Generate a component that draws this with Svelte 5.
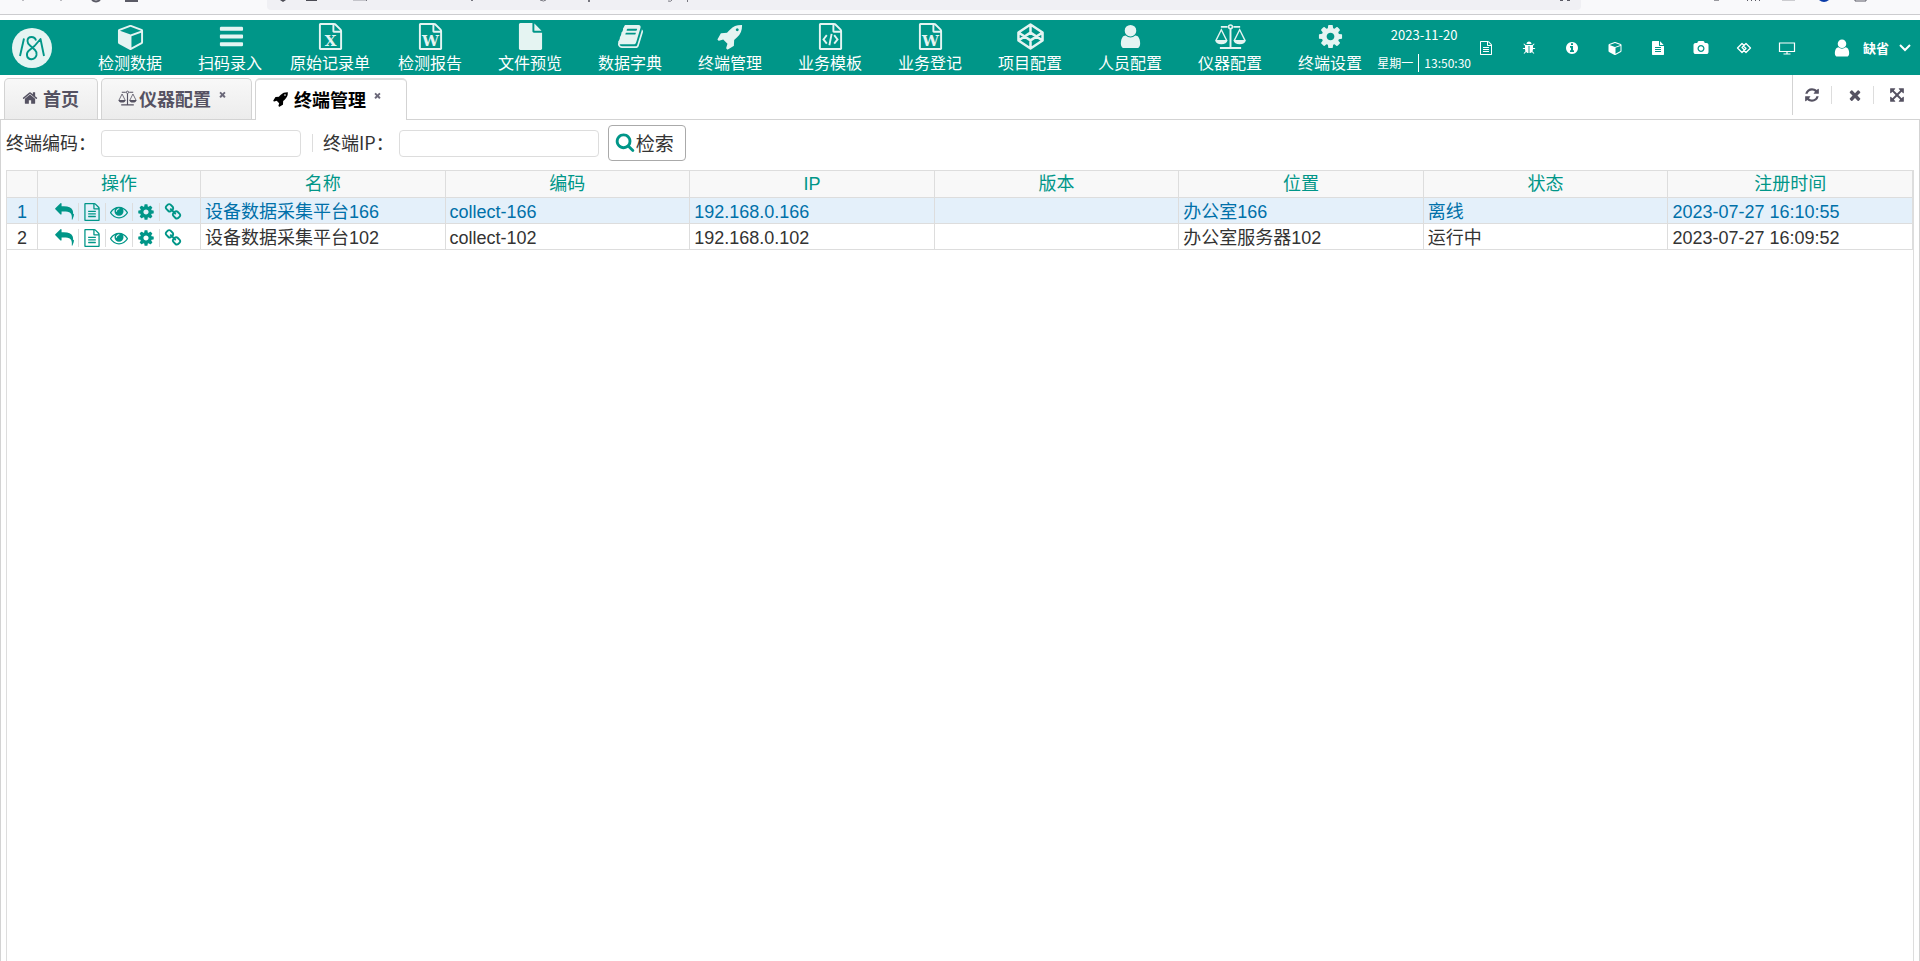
<script lang="ts">
  type Terminal = {
    name: string;
    code: string;
    ip: string;
    version: string;
    location: string;
    status: string;
    registered: string;
  };

  const menu = [
    { label: "检测数据", icon: "cube" },
    { label: "扫码录入", icon: "bars" },
    { label: "原始记录单", icon: "excel" },
    { label: "检测报告", icon: "word" },
    { label: "文件预览", icon: "file" },
    { label: "数据字典", icon: "book" },
    { label: "终端管理", icon: "rocket" },
    { label: "业务模板", icon: "code" },
    { label: "业务登记", icon: "word" },
    { label: "项目配置", icon: "codepen" },
    { label: "人员配置", icon: "user" },
    { label: "仪器配置", icon: "scale" },
    { label: "终端设置", icon: "cog" },
  ];

  const shortcuts = [
    { label: "日志", icon: "textO" },
    { label: "调试", icon: "bug" },
    { label: "信息", icon: "info" },
    { label: "模块", icon: "cube" },
    { label: "文档", icon: "text" },
    { label: "截图", icon: "camera" },
    { label: "链接", icon: "links" },
    { label: "屏幕", icon: "monitor" },
  ];

  const tabs = [
    { label: "首页", icon: "home", closable: false },
    { label: "仪器配置", icon: "scale", closable: true },
    { label: "终端管理", icon: "rocket", closable: true },
  ];

  const columns = ["名称", "编码", "IP", "版本", "位置", "状态", "注册时间"];

  const actions = [
    { label: "返回", icon: "reply" },
    { label: "日志", icon: "textO" },
    { label: "查看", icon: "eye" },
    { label: "设置", icon: "cog" },
    { label: "关联", icon: "chain" },
  ];

  const rows: Terminal[] = [
    {
      name: "设备数据采集平台166",
      code: "collect-166",
      ip: "192.168.0.166",
      version: "",
      location: "办公室166",
      status: "离线",
      registered: "2023-07-27 16:10:55",
    },
    {
      name: "设备数据采集平台102",
      code: "collect-102",
      ip: "192.168.0.102",
      version: "",
      location: "办公室服务器102",
      status: "运行中",
      registered: "2023-07-27 16:09:52",
    },
  ];

  let activeTab = $state(2);
  let selected = $state(0);
  let code = $state("");
  let ip = $state("");

  const page =
    "M1596 380q28 28 48 76t20 88v1152q0 40-28 68t-68 28h-1344q-40 0-68-28t-28-68v-1600q0-40 28-68t68-28h896q40 0 88 20t76 48zm-444-244v376h376q-10-29-22-41l-313-313q-12-12-41-22zm384 1528v-1024h-416q-40 0-68-28t-28-68v-416h-768v1536h1280z";

  const paths: Record<string, string> = {
    textO:
      page +
      "M512 800q0-14 9-23t23-9h704q14 0 23 9t9 23v64q0 14-9 23t-23 9h-704q-14 0-23-9t-9-23v-64zm736 224q14 0 23 9t9 23v64q0 14-9 23t-23 9h-704q-14 0-23-9t-9-23v-64q0-14 9-23t23-9h704zm0 256q14 0 23 9t9 23v64q0 14-9 23t-23 9h-704q-14 0-23-9t-9-23v-64q0-14 9-23t23-9h704z",
    text: "M1596 476q14 14 28 36h-472v-472q22 14 36 28zm-476 164h544v1056q0 40-28 68t-68 28h-1344q-40 0-68-28t-28-68v-1600q0-40 28-68t68-28h800v544q0 40 28 68t68 28zm160 736v-64q0-14-9-23t-23-9h-704q-14 0-23 9t-9 23v64q0 14 9 23t23 9h704q14 0 23-9t9-23zm0-256v-64q0-14-9-23t-23-9h-704q-14 0-23 9t-9 23v64q0 14 9 23t23 9h704q14 0 23-9t9-23zm0-256v-64q0-14-9-23t-23-9h-704q-14 0-23 9t-9 23v64q0 14 9 23t23 9h704q14 0 23-9t9-23z",
    file: "M1152 512v-472q22 14 36 28l408 408q14 14 28 36h-472zm-128 32q0 40 28 68t68 28h544v1056q0 40-28 68t-68 28h-1344q-40 0-68-28t-28-68v-1600q0-40 28-68t68-28h800v544z",
    cube: "M960 1629l640-349v-636l-640 233v752zm-64-865l698-254-698-254-698 254zm832-252v768q0 35-18 65t-49 47l-704 384q-28 16-61 16t-61-16l-704-384q-31-17-49-47t-18-65v-768q0-40 23-73t61-47l704-256q22-8 44-8t44 8l704 256q38 14 61 47t23 73z",
    bars: "M1664 1344v128q0 26-19 45t-45 19h-1408q-26 0-45-19t-19-45v-128q0-26 19-45t45-19h1408q26 0 45 19t19 45zm0-512v128q0 26-19 45t-45 19h-1408q-26 0-45-19t-19-45v-128q0-26 19-45t45-19h1408q26 0 45 19t19 45zm0-512v128q0 26-19 45t-45 19h-1408q-26 0-45-19t-19-45v-128q0-26 19-45t45-19h1408q26 0 45 19t19 45z",
    book: "M1703 478q40 57 18 129l-275 906q-19 64-76.5 107.5t-122.5 43.5h-923q-77 0-148.5-53.5t-99.5-131.5q-24-67-2-127 0-4 3-27t4-37q1-8-3-21.5t-3-19.5q2-11 8-21t16.5-23.5 16.5-23.5q23-38 45-91.5t30-91.5q3-10 .5-30t-.5-28q3-11 17-28t17-23q21-36 42-92t25-90q1-9-2.5-32t.5-28q4-13 22-30.5t22-22.5q19-26 42.5-84.5t27.5-96.5q1-8-3-25.5t-2-26.5q2-8 9-18t18-23 17-21q8-12 16.5-30.5t15-35 16-36 19.5-32 26.5-23.5 36-11.5 47.5 5.5l-1 3q38-9 51-9h761q74 0 114 56t18 130l-274 906q-36 119-71.5 153.5t-128.5 34.5h-869q-27 0-38 15-11 16-1 43 24 70 144 70h923q29 0 56-15.5t35-41.5l300-987q7-22 5-57 38 15 59 43zm-1064 2q-4 13 2 22.5t20 9.5h608q13 0 25.5-9.5t16.5-22.5l21-64q4-13-2-22.5t-20-9.5h-608q-13 0-25.5 9.5t-16.5 22.5zm-83 256q-4 13 2 22.5t20 9.5h608q13 0 25.5-9.5t16.5-22.5l21-64q4-13-2-22.5t-20-9.5h-608q-13 0-25.5 9.5t-16.5 22.5z",
    rocket:
      "M1440 448q0-40-28-68t-68-28-68 28-28 68 28 68 68 28 68-28 28-68zm224-288q0 249-75.5 430.5t-253.5 360.5q-81 80-195 176l-20 379q-2 16-16 26l-384 224q-7 4-16 4-12 0-23-9l-64-64q-13-14-8-32l85-276-281-281-276 85q-3 1-9 1-14 0-23-9l-64-64q-17-19-5-39l224-384q10-14 26-16l379-20q96-114 176-195 188-187 358-258t431-71q14 0 24 9.5t10 22.5z",
    user: "M1536 1399q0 109-62.5 187t-150.5 78h-854q-88 0-150.5-78t-62.5-187q0-85 8.5-160.5t31.5-152 58.5-131 94-89 134.5-34.5q131 128 313 128t313-128q76 0 134.5 34.5t94 89 58.5 131 31.5 152 8.5 160.5zm-256-887q0 159-112.5 271.5t-271.5 112.5-271.5-112.5-112.5-271.5 112.5-271.5 271.5-112.5 271.5 112.5 112.5 271.5z",
    cog: "M1152 896q0-106-75-181t-181-75-181 75-75 181 75 181 181 75 181-75 75-181zm512-109v222q0 12-8 23t-20 13l-185 28q-19 54-39 91 35 50 107 138 10 12 10 25t-9 23q-27 37-99 108t-94 71q-12 0-26-9l-138-108q-44 23-91 38-16 136-29 186-7 28-36 28h-222q-14 0-24.5-8.5t-11.5-21.5l-28-184q-49-16-90-37l-141 107q-10 9-25 9-14 0-25-11-126-114-165-168-7-10-7-23 0-12 8-23 15-21 51-66.5t54-70.5q-27-50-41-99l-183-27q-13-2-21-12.5t-8-23.5v-222q0-12 8-23t19-13l186-28q14-46 39-92-40-57-107-138-10-12-10-24 0-10 9-23 26-36 98.5-107.5t94.5-71.5q13 0 26 10l138 107q44-23 91-38 16-136 29-186 7-28 36-28h222q14 0 24.5 8.5t11.5 21.5l28 184q49 16 90 37l142-107q9-9 24-9 13 0 25 10 129 119 165 170 7 8 7 22 0 12-8 23-15 21-51 66.5t-54 70.5q26 50 41 98l183 28q13 2 21 12.5t8 23.5z",
    bug: "M1696 960q0 26-19 45t-45 19h-224q0 171-67 290l208 209q19 19 19 45t-19 45q-18 19-45 19t-45-19l-198-197q-5 5-15 13t-42 28.5-65 36.5-82 29-97 13v-896h-128v896q-51 0-101.5-13.5t-87-33-66-39-43.5-32.5l-15-14-183 207q-20 21-48 21-24 0-43-16-19-18-20.5-44.5t15.5-46.5l202-227q-58-114-58-274h-224q-26 0-45-19t-19-45 19-45 45-19h224v-294l-173-173q-19-19-19-45t19-45 45-19 45 19l173 173h844l173-173q19-19 45-19t45 19 19 45-19 45l-173 173v294h224q26 0 45 19t19 45zm-480-576h-640q0-133 93.5-226.5t226.5-93.5 226.5 93.5 93.5 226.5z",
    info: "M1152 1376v-160q0-14-9-23t-23-9h-96v-512q0-14-9-23t-23-9h-320q-14 0-23 9t-9 23v160q0 14 9 23t23 9h96v320h-96q-14 0-23 9t-9 23v160q0 14 9 23t23 9h448q14 0 23-9t9-23zm-128-896v-160q0-14-9-23t-23-9h-192q-14 0-23 9t-9 23v160q0 14 9 23t23 9h192q14 0 23-9t9-23zm640 416q0 209-103 385.5t-279.5 279.5-385.5 103-385.5-103-279.5-279.5-103-385.5 103-385.5 279.5-279.5 385.5-103 385.5 103 279.5 279.5 103 385.5z",
    camera:
      "M896 672q119 0 203.5 84.5t84.5 203.5-84.5 203.5-203.5 84.5-203.5-84.5-84.5-203.5 84.5-203.5 203.5-84.5zm704-416q106 0 181 75t75 181v896q0 106-75 181t-181 75h-1408q-106 0-181-75t-75-181v-896q0-106 75-181t181-75h224l51-136q19-49 69.5-84.5t103.5-35.5h512q53 0 103.5 35.5t69.5 84.5l51 136h224zm-704 1152q185 0 316.5-131.5t131.5-316.5-131.5-316.5-316.5-131.5-316.5 131.5-131.5 316.5 131.5 316.5 316.5 131.5z",
    home: "M1472 992v480q0 26-19 45t-45 19h-384v-384h-256v384h-384q-26 0-45-19t-19-45v-480q0-1 .5-3t.5-3l575-474 575 474q1 2 1 6zm223-69l-62 74q-8 9-21 11h-3q-13 0-21-7l-692-577-692 577q-12 8-24 7-13-2-21-11l-62-74q-8-10-7-23.5t11-21.5l719-599q32-26 76-26t76 26l244 204v-195q0-14 9-23t23-9h192q14 0 23 9t9 23v408l219 182q10 8 11 21.5t-7 23.5z",
    search:
      "M1216 832q0-185-131.5-316.5t-316.5-131.5-316.5 131.5-131.5 316.5 131.5 316.5 316.5 131.5 316.5-131.5 131.5-316.5zm512 832q0 52-38 90t-90 38q-54 0-90-38l-343-342q-179 124-399 124-143 0-273.5-55.5t-225-150-150-225-55.5-273.5 55.5-273.5 150-225 225-150 273.5-55.5 273.5 55.5 225 150 150 225 55.5 273.5q0 220-124 399l343 343q37 37 37 90z",
    reply:
      "M1792 1120q0 166-127 451-3 7-10.5 24t-13.5 30-13 22q-12 17-28 17-15 0-23.5-10t-8.5-25q0-9 2.5-26.5t2.5-23.5q5-68 5-123 0-112-19.5-200.5t-54-153.5-89-112-117.5-79-149-45.5-172.5-22.5-198.5-7h-224v256q0 26-19 45t-45 19-45-19l-512-512q-19-19-19-45t19-45l512-512q19-19 45-19t45 19 19 45v256h224q713 0 875 403 53 134 53 333z",
    eye: "M1664 960q-152-236-381-353 61 104 61 225 0 185-131.5 316.5t-316.5 131.5-316.5-131.5-131.5-316.5q0-121 61-225-229 117-381 353 133 205 333.5 326.5t434.5 121.5 434.5-121.5 333.5-326.5zm-720-384q0-20-14-34t-34-14q-125 0-214.5 89.5t-89.5 214.5q0 20 14 34t34 14 34-14 14-34q0-86 61-147t147-61q20 0 34-14t14-34zm848 384q0 34-20 69-140 230-376.5 368.5t-499.5 138.5-499.5-139-376.5-368q-20-35-20-69t20-69q140-229 376.5-368t499.5-139 499.5 139 376.5 368q20 35 20 69z",
    chain:
      "M1520 1216q0-40-28-68l-208-208q-28-28-68-28-42 0-72 32 3 3 19 18.5t21.5 21.5 15 19 13 25.5 3.5 27.5q0 40-28 68t-68 28q-15 0-27.5-3.5t-25.5-13-19-15-21.5-21.5-18.5-19q-33 31-33 73 0 40 28 68l206 207q27 27 68 27 40 0 68-26l147-146q28-28 28-67zm-703-705q0-40-28-68l-206-207q-28-28-68-28-39 0-68 27l-147 146q-28 28-28 67 0 40 28 68l208 208q27 27 68 27 42 0 72-31-3-3-19-18.5t-21.5-21.5-15-19-13-25.5-3.5-27.5q0-40 28-68t68-28q15 0 27.5 3.5t25.5 13 19 15 21.5 21.5 18.5 19q33-31 33-73zm895 705q0 120-85 203l-147 146q-83 83-203 83-121 0-204-85l-206-207q-83-83-83-203 0-123 88-209l-88-88q-86 88-208 88-120 0-204-84l-208-208q-84-84-84-204t85-203l147-146q83-83 203-83 121 0 204 85l206 207q83 83 83 203 0 123-88 209l88 88q86-88 208-88 120 0 204 84l208 208q84 84 84 204z",
    close:
      "M1490 1322q0 40-28 68l-136 136q-28 28-68 28t-68-28l-294-294-294 294q-28 28-68 28t-68-28l-136-136q-28-28-28-68t28-68l294-294-294-294q-28-28-28-68t28-68l136-136q28-28 68-28t68 28l294 294 294-294q28-28 68-28t68 28l136 136q28 28 28 68t-28 68l-294 294 294 294q28 28 28 68z",
    refresh:
      "M1639 1056q0 5-1 7-64 268-268 434.5t-478 166.5q-146 0-282.5-55t-243.5-157l-129 129q-19 19-45 19t-45-19-19-45v-448q0-26 19-45t45-19h448q26 0 45 19t19 45-19 45l-137 137q71 66 161 102t187 36q134 0 250-65t186-179q11-17 53-117 8-23 30-23h192q13 0 22.5 9.5t9.5 22.5zm25-800v448q0 26-19 45t-45 19h-448q-26 0-45-19t-19-45 19-45l138-138q-148-137-349-137-134 0-250 65t-186 179q-11 17-53 117-8 23-30 23h-199q-13 0-22.5-9.5t-9.5-22.5v-7q65-268 270-434.5t480-166.5q146 0 284 55.5t245 156.5l130-129q19-19 45-19t45 19 19 45z",
    expand:
      "M1411 541l-355 355 355 355 144-144q29-31 70-14 39 17 39 59v448q0 26-19 45t-45 19h-448q-42 0-59-40-17-39 14-69l144-144-355-355-355 355 144 144q31 30 14 69-17 40-59 40h-448q-26 0-45-19t-19-45v-448q0-42 40-59 39-17 69 14l144 144 355-355-355-355-144 144q-19 19-45 19-12 0-24-5-40-17-40-59v-448q0-26 19-45t45-19h448q42 0 59 40 17 39-14 69l-144 144 355 355 355-355-144-144q-31-30-14-69 17-40 59-40h448q26 0 45 19t19 45v448q0 42-39 59-13 5-25 5-26 0-45-19z",
  };
</script>

{#snippet icon(name: string)}
  {#if name === "scale"}
    <svg class="icon" viewBox="0 0 28 28" fill="none" stroke="currentColor" stroke-width="2" aria-hidden="true">
      <path d="M4 4h7M17 4h7M3 26h22M14 6v20" />
      <circle cx="14" cy="4" r="2" stroke-width="1.6" />
      <path d="M-1 18L4.500 7L10 18M18 18L23.500 7L29 18" stroke-width="1.400" />
      <path d="M-2 17.500h13q-1 4.500-6.500 4.500t-6.500-4.500zM17 17.500h13q-1 4.500-6.500 4.500t-6.500-4.500z" fill="currentColor" stroke="none" />
    </svg>
  {:else if name === "codepen"}
    <svg class="icon" viewBox="0 0 28 28" fill="none" stroke="currentColor" stroke-width="2.600" stroke-linejoin="round" aria-hidden="true">
      <path d="M14 1.500L26.500 9.800V18.200L14 26.500L1.500 18.200V9.800zM1.500 9.800L14 18L26.500 9.800M1.500 18.200L14 10L26.500 18.200M14 1.500V10M14 18v8.500" />
    </svg>
  {:else if name === "links"}
    <svg class="icon" viewBox="0 0 28 28" fill="none" stroke="currentColor" stroke-width="2.600" stroke-linejoin="round" aria-hidden="true">
      <path d="M15 10L10 5L1 14L10 23L18 15L13 10M13 18L18 23L27 14L18 5L10 13L15 18" />
    </svg>
  {:else if name === "monitor"}
    <svg class="icon" viewBox="0 0 28 28" fill="none" stroke="currentColor" stroke-width="2.400" aria-hidden="true">
      <path d="M-1 4h30v17H-1zM14 21v4M7 26h14" />
    </svg>
  {:else if name === "excel" || name === "word"}
    <svg class="icon" viewBox="0 0 1792 1792" fill="currentColor" aria-hidden="true">
      <path d={page} />
      <text class="letter" x="896" y="1500" text-anchor="middle">{name === "word" ? "W" : "X"}</text>
    </svg>
  {:else if name === "code"}
    <svg class="icon" viewBox="0 0 1792 1792" fill="currentColor" aria-hidden="true">
      <path d={page} />
      <path d="M650 810L430 1088L650 1366M1142 810L1362 1088L1142 1366M970 720L822 1480" fill="none" stroke="currentColor" stroke-width="125" />
    </svg>
  {:else}
    <svg class="icon" viewBox={name === "bars" ? "-64 0 1792 1792" : "0 0 1792 1792"} fill="currentColor" aria-hidden="true">
      <path d={paths[name]} fill-rule={name === "cube" ? "evenodd" : "nonzero"} />
    </svg>
  {/if}
{/snippet}

<div class="screen">
  <div class="browser">
    <svg class="chrome-left" viewBox="0 0 267 10" aria-hidden="true">
      <path d="M22 0h2v1h-2zM60 0h2v1h-2z" fill="#bbbbc0" />
      <path d="M92 0q4 3 8 0M126 0v1h11v-1M130 0v1M134 0v1" fill="none" stroke="#5b5b66" stroke-width="2" />
    </svg>
    <div class="address">
      <svg viewBox="0 0 440 10" aria-hidden="true">
        <path d="M13 0h6l-3 2zM39 0h11v1h-11z" fill="#4b4b54" />
        <path d="M86 0h13v1h-13z" fill="#c4c4ca" />
        <path d="M99 0h1v1h-1zM204 0h2v1h-2zM321 0h2v2h-2zM420 0h1v2h-1z" fill="#77777f" />
        <path d="M273 0q4 2 6 0M401 1q3 1 4-1" fill="none" stroke="#77777f" />
      </svg>
      <svg class="star" viewBox="0 0 24 10" aria-hidden="true">
        <path d="M3 0h3v1h-3zM10 0h3v1h-3z" fill="#5b5b66" />
      </svg>
    </div>
    <svg class="chrome-right" viewBox="0 0 339 10" aria-hidden="true">
      <path d="M133 0h5v1h-5z" fill="#99999f" />
      <path d="M166 0h1v1h-1zM170 0h1v1h-1zM174 0h1v1h-1zM178 0h1v1h-1z" fill="#5b5b66" />
      <path d="M201 0h13v1h-13z" fill="#ccccd0" />
      <path d="M238 0q5 4 10 0z" fill="#0a3ba8" />
      <path d="M274 0v1h11v-1" fill="none" stroke="#5b5b66" />
    </svg>
  </div>

  <header>
    <a class="logo" href="#home" aria-label="首页">
      <svg viewBox="0 0 40 40" aria-hidden="true">
        <circle cx="20" cy="20" r="20" fill="#e5f4f2" />
        <g fill="none" stroke="#009688" stroke-width="1.900" stroke-linejoin="round">
          <path d="M12 10.500L8 28" />
          <path d="M24 12.500Q23 9 19.500 9Q15.500 9 15.500 13Q15.500 15.500 18 17.500L23 22Q25 24 24.500 27Q23.500 31 19.500 31.300Q15.500 31 15 27.500Q14.500 24.500 17 22.500L22.500 18L28.500 11L32 28" />
        </g>
      </svg>
    </a>
    <nav>
      {#each menu as item}
        <button class="menu-item">
          {@render icon(item.icon)}
          <span>{item.label}</span>
        </button>
      {/each}
    </nav>
    <div class="clock">
      <div class="date">2023-11-20</div>
      <div class="time"><span>星期一</span><span>13:50:30</span></div>
    </div>
    <div class="shortcuts">
      {#each shortcuts as item}
        <button aria-label={item.label}>{@render icon(item.icon)}</button>
      {/each}
    </div>
    <button class="account">
      {@render icon("user")}
      <span>缺省</span>
      <svg class="chevron" viewBox="0 0 12 8" fill="none" stroke="currentColor" stroke-width="2" aria-hidden="true">
        <path d="M1 1l5 5l5-5" />
      </svg>
    </button>
  </header>

  <div class="tab-bar">
    <div class="tabs">
      {#each tabs as tab, i}
        <div class="tab" class:active={i === activeTab}>
          <button class="tab-name" class:wide={tab.icon === "scale"} onclick={() => (activeTab = i)}>
            {@render icon(tab.icon)}
            <span>{tab.label}</span>
          </button>
          {#if tab.closable}
            <button class="tab-close" aria-label="关闭">{@render icon("close")}</button>
          {/if}
        </div>
      {/each}
    </div>
    <div class="tab-tools">
      <button aria-label="刷新">{@render icon("refresh")}</button>
      <button aria-label="关闭全部">{@render icon("close")}</button>
      <button aria-label="全屏">{@render icon("expand")}</button>
    </div>
  </div>

  <main>
    <form onsubmit={(event) => event.preventDefault()}>
      <label for="code">终端编码：</label>
      <input id="code" type="text" bind:value={code} />
      <i class="divider"></i>
      <label for="ip">终端IP：</label>
      <input id="ip" type="text" bind:value={ip} />
      <button class="search" type="submit">{@render icon("search")}<span>检索</span></button>
    </form>

    <div class="grid">
      <table>
        <colgroup>
          <col class="col-index" />
          <col class="col-actions" />
          {#each columns as _}
            <col />
          {/each}
        </colgroup>
        <thead>
          <tr>
            <th></th>
            <th>操作</th>
            {#each columns as column}
              <th>{column}</th>
            {/each}
          </tr>
        </thead>
        <tbody>
          {#each rows as row, i}
            <tr class:selected={i === selected} onclick={() => (selected = i)}>
              <td class="index">{i + 1}</td>
              <td>
                <div class="actions">
                  {#each actions as action}
                    <button aria-label={action.label}>{@render icon(action.icon)}</button>
                  {/each}
                </div>
              </td>
              <td>{row.name}</td>
              <td>{row.code}</td>
              <td>{row.ip}</td>
              <td>{row.version}</td>
              <td>{row.location}</td>
              <td>{row.status}</td>
              <td>{row.registered}</td>
            </tr>
          {/each}
        </tbody>
      </table>
    </div>
  </main>
</div>

<style>
  :global(body) {
    margin: 0;
    background: #fff;
  }

  .screen {
    display: flex;
    flex-direction: column;
    min-height: 100vh;
    font-family: "Noto Sans CJK SC", sans-serif;
    color: #333;
  }

  .screen :global(*) {
    box-sizing: border-box;
  }

  button {
    padding: 0;
    border: 0;
    background: none;
    color: inherit;
    font: inherit;
    cursor: pointer;
  }

  .icon {
    display: block;
    flex: none;
    width: 16px;
    height: 16px;
    overflow: visible;
  }

  .letter {
    font: bold 1000px "DejaVu Serif", serif;
  }

  /* browser toolbar */
  .browser {
    display: flex;
    height: 15px;
    background: #f9f9fb;
    border-bottom: 1px solid #cccccf;
  }

  .browser svg {
    display: block;
    height: 10px;
  }

  .chrome-left {
    width: 267px;
  }

  .chrome-right {
    width: 339px;
  }

  .address {
    flex: 1;
    display: flex;
    justify-content: space-between;
    height: 10px;
    background: #f0f0f4;
    border-radius: 0 0 4px 4px;
  }

  .star {
    width: 24px;
  }

  header {
    display: flex;
    align-items: center;
    height: 55px;
    margin-top: 5px;
    padding-right: 9px;
    background: #009688;
    color: #fff;
  }

  .logo {
    flex: none;
    width: 80px;
    padding-left: 12px;
  }

  .logo svg {
    display: block;
    width: 40px;
    height: 40px;
  }

  nav {
    display: flex;
    min-width: 0;
  }

  .menu-item {
    flex: none;
    display: flex;
    flex-direction: column;
    align-items: center;
    width: 100px;
    padding-top: 2px;
    font-size: 16px;
    line-height: 24px;
    white-space: nowrap;
  }

  .menu-item .icon {
    width: 27px;
    height: 27px;
    color: #e5f4f2;
  }

  .clock {
    flex: none;
    display: flex;
    flex-direction: column;
    gap: 9px;
    margin-left: auto;
    padding-top: 2px;
    text-align: center;
    white-space: nowrap;
  }

  .date {
    font-size: 13px;
    line-height: 20px;
  }

  .time {
    display: flex;
    font-size: 12px;
    line-height: 18px;
  }

  .time span + span {
    margin-left: 5px;
    padding-left: 5px;
    border-left: 1px solid #fff;
  }

  .shortcuts {
    flex: none;
    display: flex;
    gap: 29px;
    margin-left: 8px;
  }

  .shortcuts .icon {
    width: 14px;
    height: 14px;
  }

  .account {
    flex: none;
    display: flex;
    align-items: center;
    margin-left: 38px;
    font-size: 13px;
    font-weight: bold;
    white-space: nowrap;
  }

  .account .icon {
    width: 20px;
    height: 20px;
  }

  .account span {
    margin: 0 10px 0 11px;
  }

  .chevron {
    width: 12px;
    height: 8px;
  }

  /* tabs */
  .tab-bar {
    display: flex;
    justify-content: space-between;
    height: 44px;
    color: #555262;
  }

  .tabs {
    display: flex;
    align-items: flex-end;
    gap: 3px;
    padding-left: 4px;
  }

  .tab {
    display: flex;
    height: 41px;
    padding: 0 18px 0 17px;
    border: 1px solid #d3d3d3;
    border-bottom: 0;
    border-radius: 5px 5px 0 0;
    background: linear-gradient(#f8f8f8, #ececec);
  }

  .tab:nth-child(n + 2) {
    padding-right: 24px;
  }

  .tab.active {
    position: relative;
    height: 42px;
    margin-bottom: -1px;
    border-top: 2px solid #ddd;
    background: #fff;
    color: #000;
  }

  .tab-name {
    display: flex;
    align-items: center;
    gap: 5px;
    padding-bottom: 2px;
    font-size: 18px;
    font-weight: bold;
    white-space: nowrap;
  }

  .tab-name.wide {
    gap: 3px;
  }

  .tab-name.wide .icon {
    width: 17px;
  }

  .tab-close {
    align-self: flex-start;
    margin: 11px 0 0 7px;
    color: #6b6879;
  }

  .tab-close .icon {
    width: 9px;
    height: 9px;
  }

  .tab-tools {
    display: flex;
    align-items: center;
    height: 40px;
    padding-right: 5px;
    border-left: 1px solid #d3d3d3;
  }

  .tab-tools button {
    display: flex;
    justify-content: center;
    align-items: center;
    width: 38px;
    height: 18px;
  }

  .tab-tools button + button {
    width: 42px;
    padding-left: 5px;
    border-left: 1px solid #ddd;
  }

  /* content */
  main {
    flex: 1;
    display: flex;
    flex-direction: column;
    padding: 5px 5px 0;
    border: 1px solid #d3d3d3;
    border-bottom: 0;
  }

  form {
    display: flex;
    align-items: center;
    height: 36px;
    font-size: 18px;
    white-space: nowrap;
  }

  label {
    padding-bottom: 2px;
    color: #333;
  }

  input {
    width: 200px;
    height: 27px;
    margin-left: 5px;
    padding: 0 5px;
    border: 1px solid #ddd;
    border-radius: 4px;
    font: 16px "Liberation Sans", sans-serif;
  }

  .divider {
    width: 1px;
    height: 18px;
    margin: 0 10px 0 11px;
    background: #ddd;
  }

  .search {
    display: flex;
    align-items: center;
    gap: 1px;
    height: 36px;
    margin-left: 9px;
    padding: 0 11px 2px 6px;
    border: 1px solid #aaa;
    border-radius: 4px;
    font-size: 19px;
  }

  .search .icon {
    width: 20px;
    height: 20px;
    color: #009688;
  }

  .grid {
    flex: 1;
    margin-top: 9px;
    border: 1px solid #ddd;
    border-bottom: 0;
  }

  table {
    width: 100%;
    table-layout: fixed;
    border-collapse: separate;
    border-spacing: 0;
    font-family: "Liberation Sans", "Noto Sans CJK SC", sans-serif;
    font-size: 18px;
    line-height: 22px;
  }

  .col-index {
    width: 31px;
  }

  .col-actions {
    width: 163px;
  }

  th,
  td {
    height: 26px;
    padding: 3px 0 0 4px;
    border-right: 1px solid #ddd;
    border-bottom: 1px solid #ddd;
    text-align: left;
    white-space: nowrap;
  }

  th {
    height: 27px;
    padding: 0;
    background: #f8f8f8;
    color: #009688;
    font-weight: normal;
    text-align: center;
  }

  .index {
    padding-left: 0;
    text-align: center;
  }

  .selected {
    background: #e4f0fa;
    color: #0070a9;
  }

  .actions {
    display: flex;
    align-items: center;
    justify-content: center;
    height: 22px;
    padding-right: 4px;
    color: #009688;
  }

  .actions button {
    height: 18px;
    padding: 0 4px;
  }

  .actions button + button {
    border-left: 1px solid #ddd;
  }

  .actions .icon {
    width: 18px;
    height: 18px;
  }
</style>
